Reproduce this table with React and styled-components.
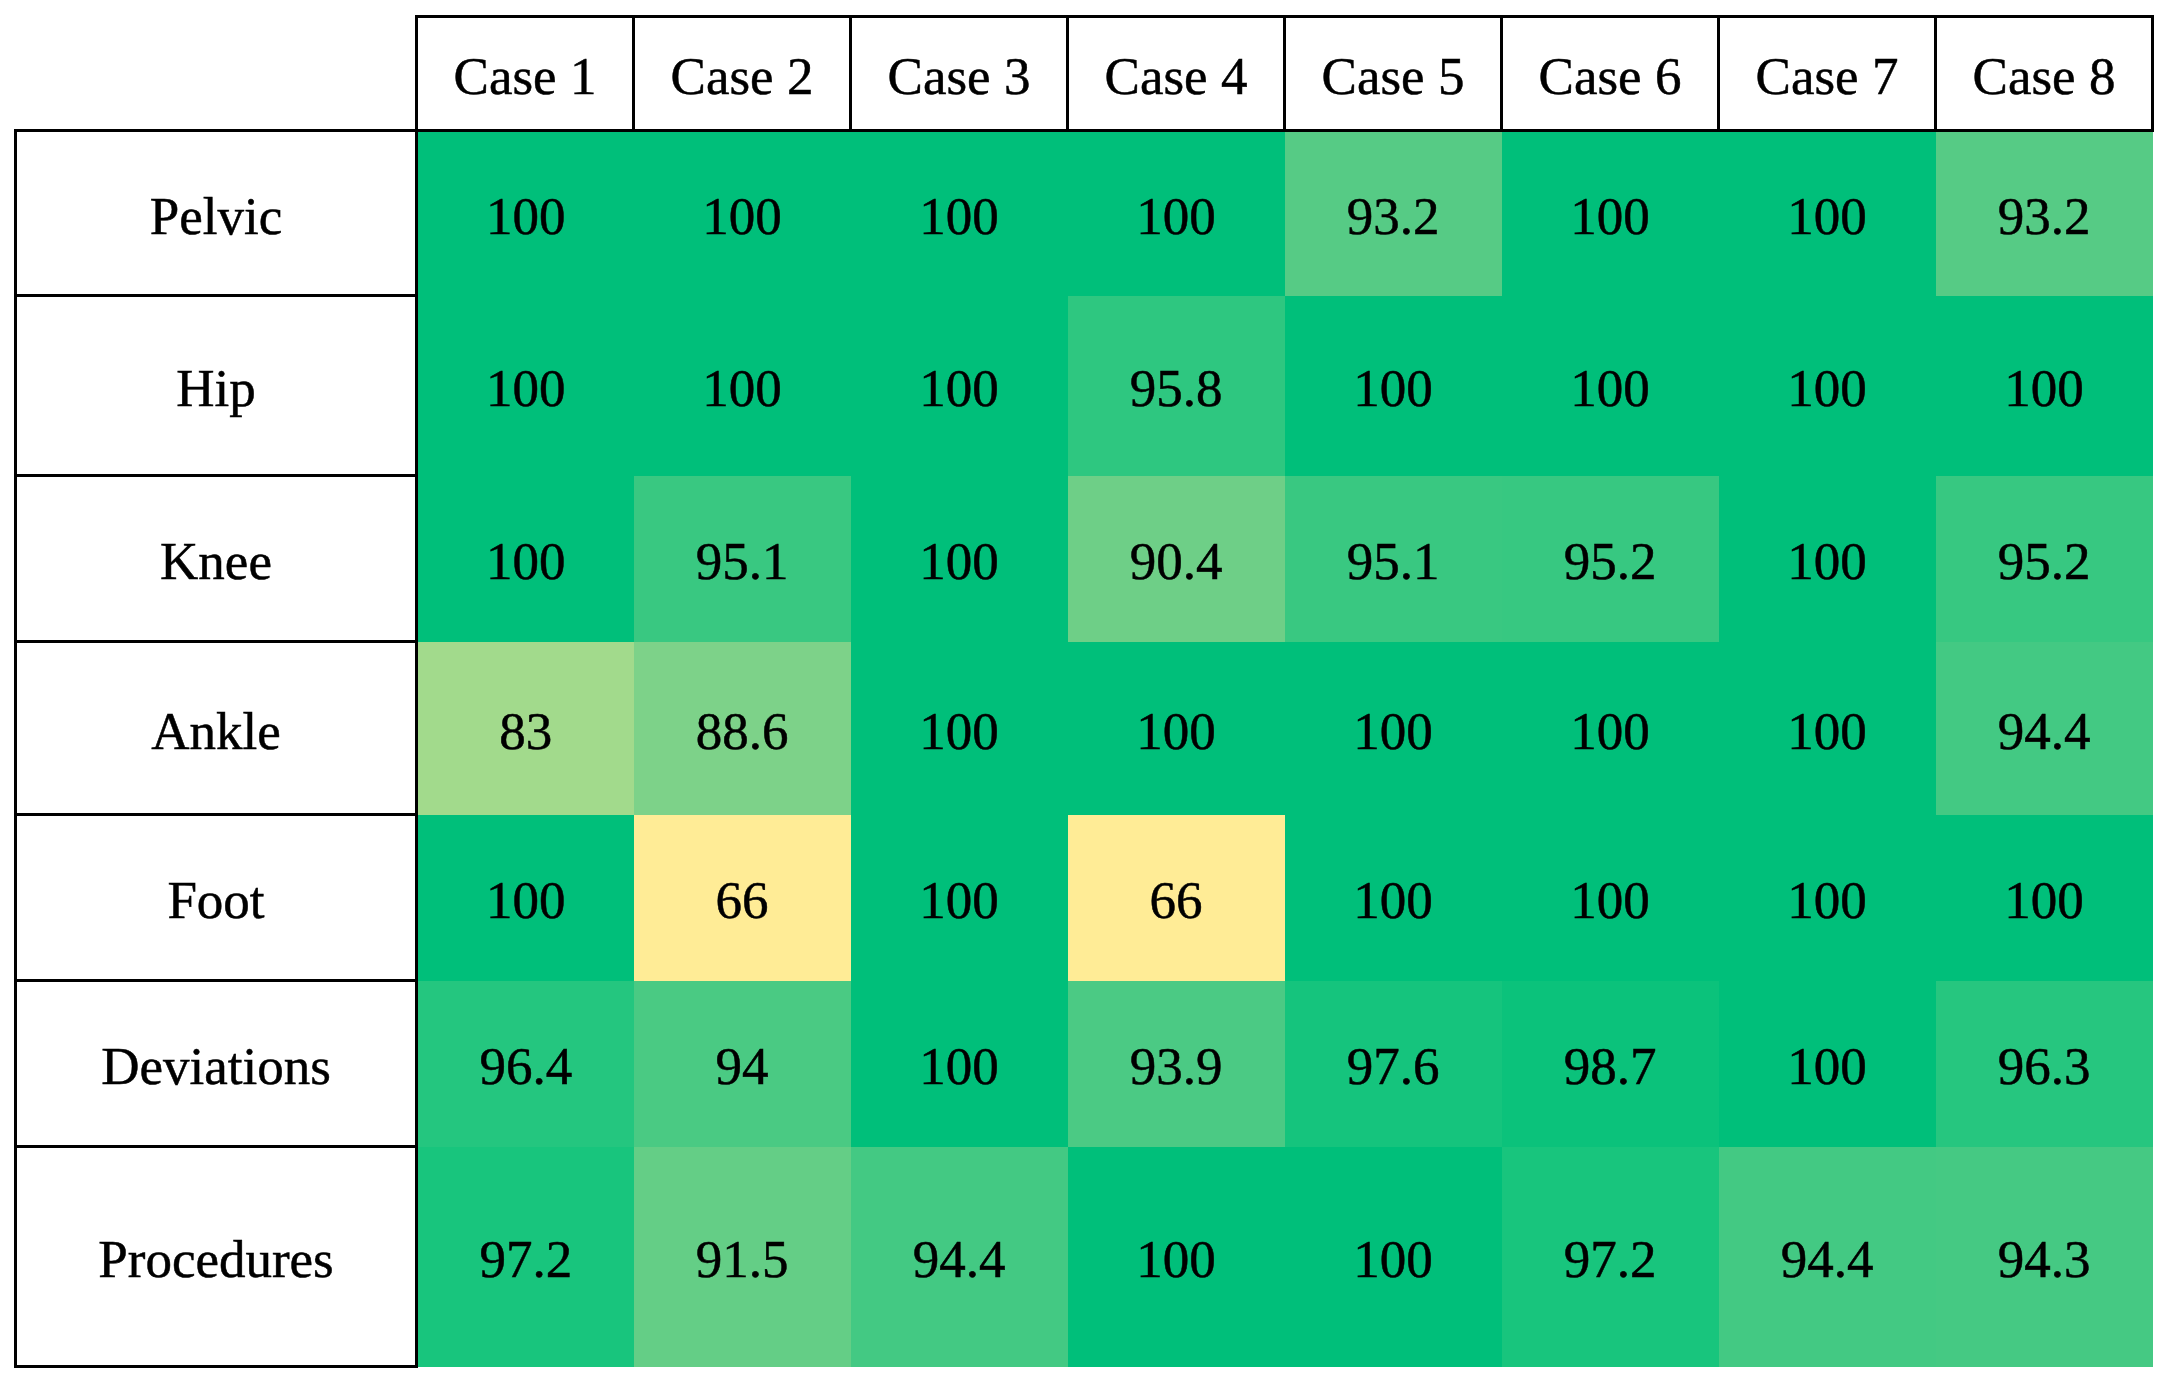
import styled, { createGlobalStyle } from "styled-components";

const GlobalStyle = createGlobalStyle`
  html, body {
    margin: 0;
    padding: 0;
    background: #ffffff;
  }
`;

const Page = styled.div`
  padding: 15px 0 0 14px;
`;

const Table = styled.table`
  border-collapse: collapse;
  table-layout: fixed;
  width: 2139px;
  font-family: "Liberation Serif", "Times New Roman", serif;
  color: #000;

  th,
  td {
    font-family: "Liberation Serif", "Times New Roman", serif;
    font-size: 53px;
    font-weight: 400;
    text-align: center;
    vertical-align: middle;
    padding: 5px 0 0;
    -webkit-text-stroke: 0.5px #000;
  }
`;

const Row = styled.tr`
  height: ${(props) => props.h}px;
`;

const Corner = styled.th`
  border: none;
`;

const HeadCell = styled.th`
  border: 3px solid #000;
  background: #fff;
`;

const Label = styled.td`
  border: 3px solid #000;
  background: #fff;
`;

const Value = styled.td`
  border: none;
  background: ${(props) => props.bg};
`;

// colour-scale anchors read off the reference
const stops = [
  [66, [255, 236, 150]],
  [83, [162, 218, 140]],
  [88.6, [125, 210, 137]],
  [93.2, [86, 203, 133]],
  [97.2, [24, 197, 125]],
  [100, [0, 191, 122]],
];

function scale(v) {
  for (let i = 0; i < stops.length - 1; i++) {
    const [a, ca] = stops[i];
    const [b, cb] = stops[i + 1];
    if (v >= a && v <= b) {
      const t = (v - a) / (b - a);
      const c = ca.map((x, k) => Math.round(x + (cb[k] - x) * t));
      return `rgb(${c.join(",")})`;
    }
  }
  return "rgb(0,191,122)";
}

const cases = ["Case 1", "Case 2", "Case 3", "Case 4", "Case 5", "Case 6", "Case 7", "Case 8"];

const rows = [
  { name: "Pelvic", h: 165, values: ["100", "100", "100", "100", "93.2", "100", "100", "93.2"] },
  { name: "Hip", h: 180, values: ["100", "100", "100", "95.8", "100", "100", "100", "100"] },
  { name: "Knee", h: 166, values: ["100", "95.1", "100", "90.4", "95.1", "95.2", "100", "95.2"] },
  { name: "Ankle", h: 173, values: ["83", "88.6", "100", "100", "100", "100", "100", "94.4"] },
  { name: "Foot", h: 166, values: ["100", "66", "100", "66", "100", "100", "100", "100"] },
  { name: "Deviations", h: 166, values: ["96.4", "94", "100", "93.9", "97.6", "98.7", "100", "96.3"] },
  { name: "Procedures", h: 220, values: ["97.2", "91.5", "94.4", "100", "100", "97.2", "94.4", "94.3"] },
];

export default function App() {
  return (
    <Page>
      <GlobalStyle />
      <Table>
        <colgroup>
          <col style={{ width: 401 }} />
          {cases.map((c) => (
            <col key={c} style={{ width: 217 }} />
          ))}
        </colgroup>
        <thead>
          <Row h={114}>
            <Corner />
            {cases.map((c) => (
              <HeadCell key={c}>{c}</HeadCell>
            ))}
          </Row>
        </thead>
        <tbody>
          {rows.map((r) => (
            <Row key={r.name} h={r.h}>
              <Label>{r.name}</Label>
              {r.values.map((v, i) => (
                <Value key={i} bg={scale(parseFloat(v))}>
                  {v}
                </Value>
              ))}
            </Row>
          ))}
        </tbody>
      </Table>
    </Page>
  );
}
